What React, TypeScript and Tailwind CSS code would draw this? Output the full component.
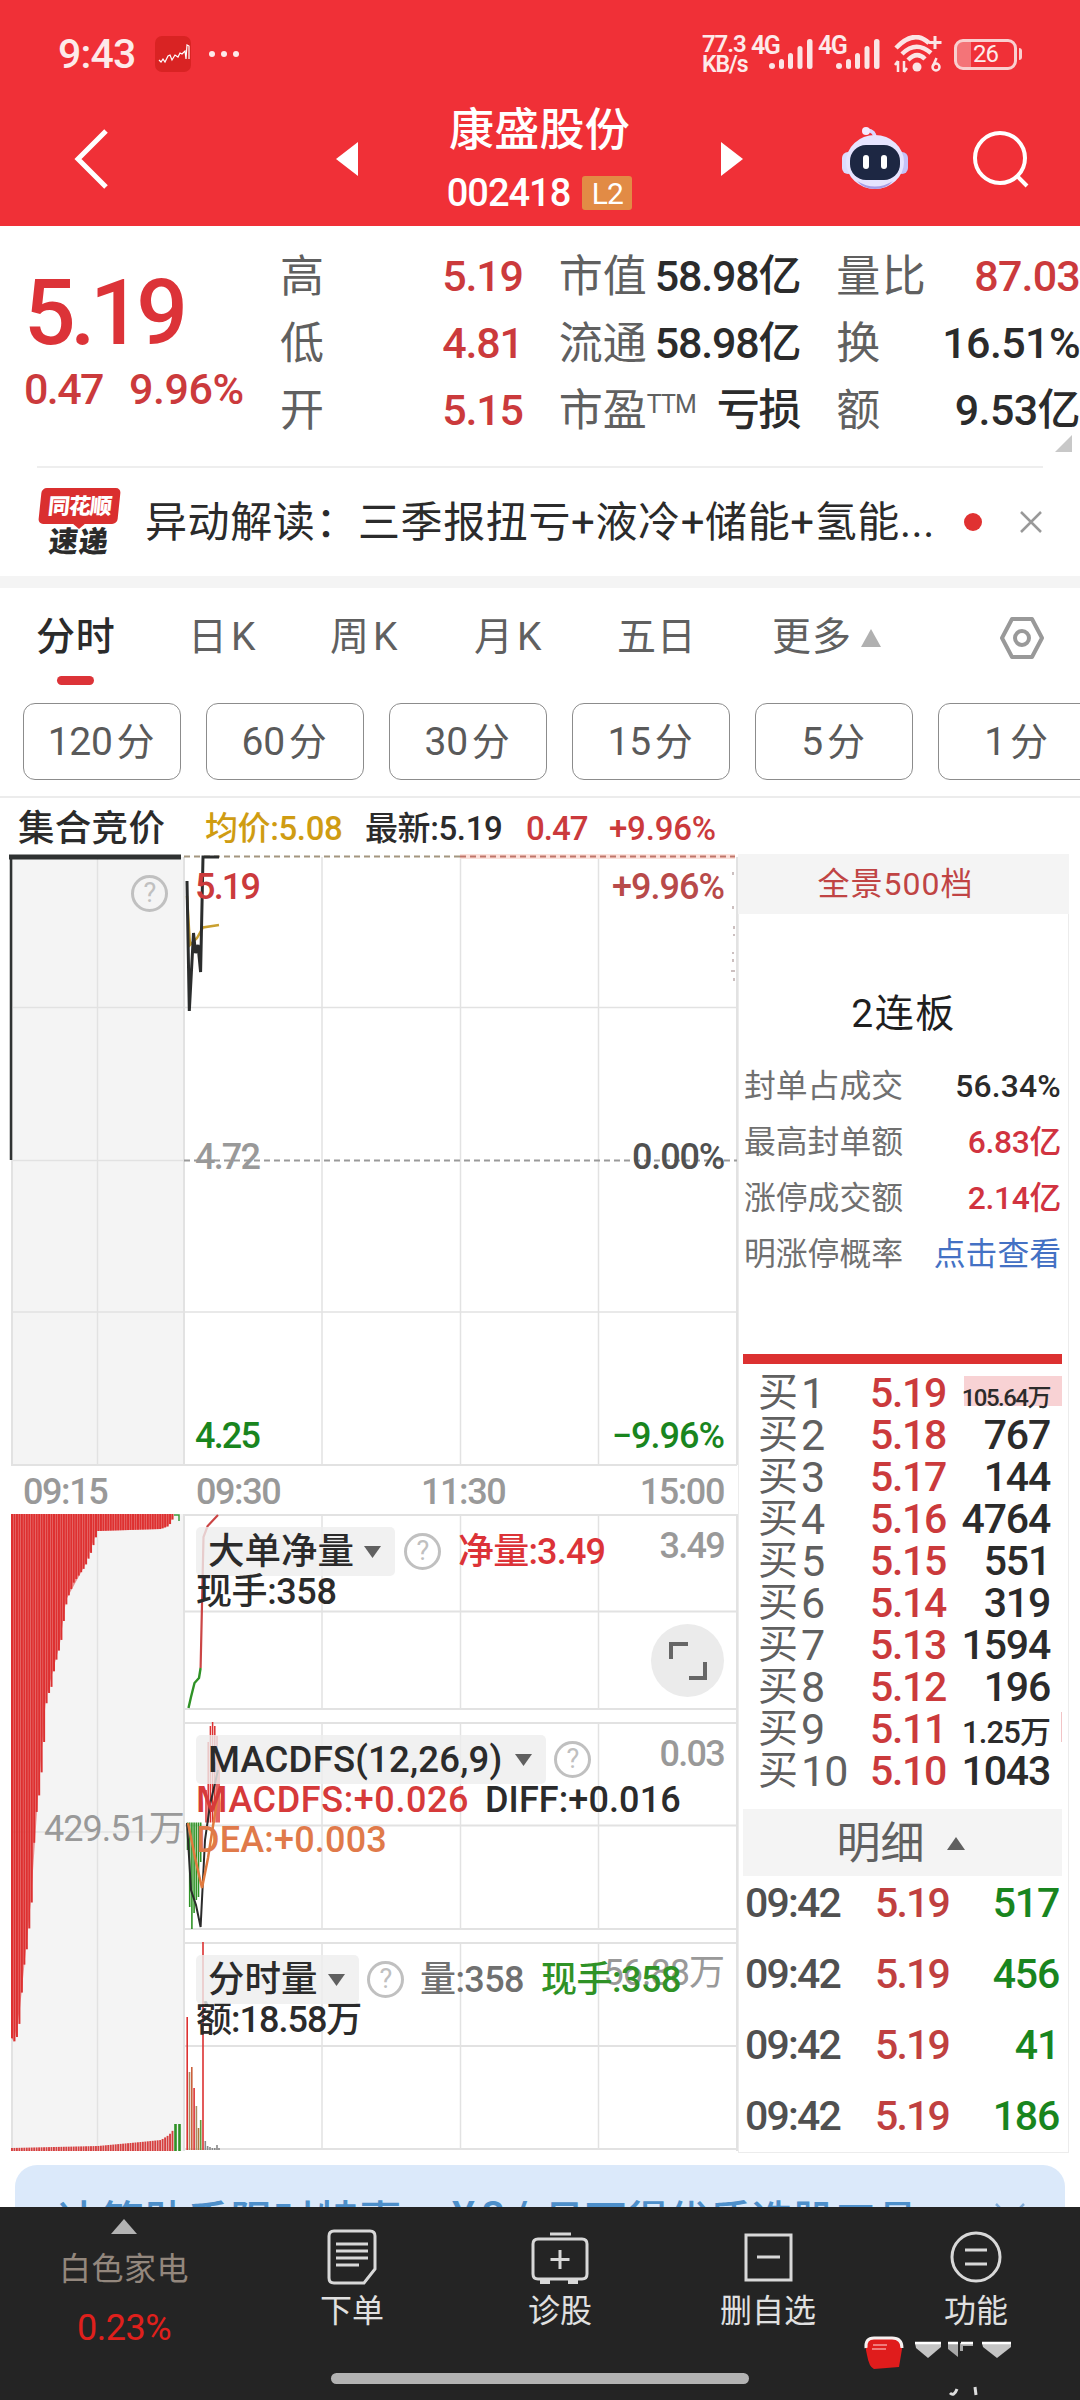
import { Fragment } from 'react';
import type { ReactNode } from 'react';

const RED = '#dc3131';

const quotes = [
  { a: '高', av: '5.19', b: '市值', bv: '58.98亿', c: '量比', cv: '87.03', hot: true },
  { a: '低', av: '4.81', b: '流通', bv: '58.98亿', c: '换', cv: '16.51%' },
  { a: '开', av: '5.15', b: '市盈', sup: 'TTM', bv: '亏损', c: '额', cv: '9.53亿' },
];

const periods = ['120分', '60分', '30分', '15分', '5分', '1分'];

const limitInfo = [
  { label: '封单占成交', value: '56.34%', cls: 'text-[#2b2b2b] font-medium tracking-[0.2px]' },
  { label: '最高封单额', value: '6.83亿', cls: 'text-[#d13340] font-medium tracking-[-0.3px]' },
  { label: '涨停成交额', value: '2.14亿', cls: 'text-[#d13340] font-medium tracking-[-0.3px]' },
  { label: '明涨停概率', value: '点击查看', cls: 'text-[#4471c4]' },
];

const bids = [
  { price: '5.19', vol: '105.64万' },
  { price: '5.18', vol: '767' },
  { price: '5.17', vol: '144' },
  { price: '5.16', vol: '4764' },
  { price: '5.15', vol: '551' },
  { price: '5.14', vol: '319' },
  { price: '5.13', vol: '1594' },
  { price: '5.12', vol: '196' },
  { price: '5.11', vol: '1.25万' },
  { price: '5.10', vol: '1043' },
];

const trades = ['517', '456', '41', '186'];

// [x, bottom] outline of the unmatched auction volume
const auctionOutline = [
  [10, 2037], [14, 2042], [17.5, 2033], [20, 2008], [22, 1973], [27, 1942], [31, 1900], [34, 1823],
  [38, 1797], [42.5, 1755], [44, 1723], [46, 1698], [50.5, 1687], [54, 1665], [60, 1643], [63, 1620],
  [66, 1600], [73, 1582], [84, 1567], [90, 1553], [97, 1531], [160, 1529], [168, 1526], [173, 1517],
];

// [x, top] outline of the matched auction volume
const matchedOutline = [[10, 2148], [97, 2146], [140, 2142], [160, 2140], [168, 2135], [174, 2128]];

function interpolate(points: number[][], x: number) {
  for (let i = 1; i < points.length; i++) {
    const [x0, y0] = points[i - 1];
    const [x1, y1] = points[i];
    if (x <= x1) return y0 + ((y1 - y0) * (x - x0)) / (x1 - x0);
  }
  return points[points.length - 1][1];
}

const barXs = Array.from({ length: 66 }, (_, i) => 11 + i * 2.47);

const macdUp = [[206, 1790], [208.2, 1742], [210.4, 1726], [212.6, 1722], [214.8, 1726], [217, 1736], [219, 1752]];
const macdDown = [[187.5, 1850], [189.7, 1907], [191.9, 1929], [194.1, 1913], [196.3, 1900], [198.5, 1897], [200.7, 1862]];
const volumeBars: [number, number, string][] = [
  [187.2, 2017, RED], [189.5, 2072, '#a98b64'], [191.8, 2067, '#c9603c'], [194.1, 2088, RED], [196.4, 2106, '#a98b64'],
  [198.5, 2128, '#b0763e'], [200.7, 2120, '#5f9c3c'], [203, 1942, RED], [205.3, 2141, '#888'], [207.6, 2146, '#888'],
  [210, 2147, '#888'], [212.4, 2148, '#888'], [214.8, 2148, '#888'], [217, 2145, '#888'], [219, 2148, '#888'],
];

function SignalBars() {
  return (
    <svg width="44" height="30" viewBox="0 0 44 30" fill="#fbe5e5">
      <rect x="0" y="24" width="6" height="6" rx="3" />
      <rect x="10" y="20" width="5" height="10" rx="2.5" />
      <rect x="19" y="14" width="5" height="16" rx="2.5" />
      <rect x="28.5" y="7" width="5" height="23" rx="2.5" />
      <rect x="38" y="0" width="5.5" height="30" rx="2.5" />
    </svg>
  );
}

function StatusBar() {
  return (
    <div className="flex h-[108px] items-center pl-[58px] text-[#fdeaea]">
      <span className="w-[97px] pt-[2px] text-[41px] font-medium tracking-[-0.8px]">9:43</span>
      <svg width="36" height="36" viewBox="0 0 36 36">
        <rect width="36" height="36" rx="7" fill="#d92323" />
        <path d="M4 24 l2 2 l2-3 l2 3 l3-6 l2-1 l2 5 l3-5 l3 2 l2-4 l2 1 l3-3 l1 8 l1-14 l2 1 v13" fill="none" stroke="#fff" strokeWidth="1.2" />
      </svg>
      <svg className="ml-[17px]" width="32" height="8" viewBox="0 0 32 8" fill="#fdeaea">
        <circle cx="4" cy="4" r="3" />
        <circle cx="16" cy="4" r="3" />
        <circle cx="28" cy="4" r="3" />
      </svg>
      <div className="ml-auto flex items-center pr-[58px]">
        <div className="flex w-[51px] flex-col text-[24px] leading-[19px] font-semibold tracking-[-1.1px]">
          <span>77.3</span>
          <span className="mt-px text-[23px]">KB/s</span>
        </div>
        <div className="flex w-[67px]">
          <span className="-mt-1 -ml-[2px] w-[18px] text-[25px] leading-[22px] font-semibold tracking-[-1.5px]">4G</span>
          <SignalBars />
        </div>
        <div className="flex w-[74px]">
          <span className="-mt-1 -ml-[2px] w-[18px] text-[25px] leading-[22px] font-semibold tracking-[-1.5px]">4G</span>
          <SignalBars />
        </div>
        <svg width="48" height="38" viewBox="0 0 48 38" fill="none" stroke="#fbe5e5" strokeWidth="4.5">
          <path d="M2 13 Q20 -6 35 8" />
          <path d="M8 19 Q22 5 37 18" />
          <path d="M14 25 Q23 16 31 24" />
          <circle cx="23" cy="32" r="4.5" fill="#fbe5e5" stroke="none" />
          <path d="M41 1 V14 M34.5 7.5 H47.5" strokeWidth="3" />
          <path d="M4 26 V37 M1 30 L4 26 M10 26 V37 M13 33 L10 37" strokeWidth="2.5" />
          <circle cx="42" cy="32" r="3.5" strokeWidth="2.5" />
          <path d="M39 31 L42.5 23" strokeWidth="2.5" />
        </svg>
        <div className="ml-3 flex items-center">
          <div className="flex h-[31px] w-[63px] items-center justify-center rounded-[9px] border-[3px] border-[#f9cfcf] bg-linear-to-r from-[#f47478] from-25% to-transparent to-25% text-[24px] tracking-[-1px]">
            26
          </div>
          <div className="ml-[2px] h-3 w-[3px] rounded-r bg-[#f9cfcf]" />
        </div>
      </div>
    </div>
  );
}

function Header() {
  return (
    <header className="h-[226px] bg-[#f03037] text-white">
      <StatusBar />
      <div className="flex h-[102px] items-center">
        <svg className="ml-[73px] shrink-0" width="36" height="60" viewBox="0 0 36 60" fill="none" stroke="#fff" strokeWidth="5">
          <path d="M33 2 L5 30 L33 58" />
        </svg>
        <svg className="ml-[227px] shrink-0" width="22" height="34" viewBox="0 0 22 34" fill="#fff">
          <path d="M22 0 V34 L0 17 Z" />
        </svg>
        <div className="flex w-[363px] shrink-0 flex-col items-center">
          <h1 className="text-[45px] leading-[56px] font-medium tracking-[0.3px]">康盛股份</h1>
          <div className="mt-[12px] flex h-[44px] items-center gap-[12px]">
            <span className="text-[38px] font-medium tracking-[-1px]">002418</span>
            <span className="flex h-[34px] w-[50px] items-center justify-center rounded-[3px] bg-[#e28b45] text-[30px] tracking-[-1px]">L2</span>
          </div>
        </div>
        <svg className="shrink-0" width="22" height="34" viewBox="0 0 22 34" fill="#fff">
          <path d="M0 0 V34 L22 17 Z" />
        </svg>
        <svg className="-mt-[2px] ml-[98px] shrink-0" width="68" height="64" viewBox="0 0 68 64">
          <path d="M34 12 Q34 5 26 4" fill="none" stroke="#dcd6ff" strokeWidth="3.5" />
          <circle cx="25" cy="5" r="4" fill="#f4eaff" />
          <rect x="1" y="26" width="12" height="22" rx="6" fill="#dcdcff" />
          <rect x="55" y="26" width="12" height="22" rx="6" fill="#c4c2f8" />
          <ellipse cx="34" cy="36" rx="29" ry="27" fill="#e6e4ff" />
          <path d="M16 55 Q34 66 52 55 Q45 63 34 63 Q23 63 16 55" fill="#a79ce6" />
          <rect x="9" y="19" width="50" height="35" rx="16" fill="#1d2743" />
          <rect x="22" y="29" width="6" height="14" rx="3" fill="#fff" />
          <rect x="40" y="29" width="6" height="14" rx="3" fill="#fff" />
        </svg>
        <svg className="ml-[64px] shrink-0" width="58" height="58" viewBox="0 0 58 58" fill="none" stroke="#fff" strokeWidth="4">
          <circle cx="27" cy="28" r="25" />
          <path d="M44 46 L54 56" />
        </svg>
      </div>
    </header>
  );
}

function Quote() {
  return (
    <section className="relative flex h-[240px] bg-white">
      <div className="w-[280px] pt-[45px] pl-[24px] text-[#dc3338]">
        <div className="text-[91px] leading-[84px] font-medium tracking-[-5.5px]">5.19</div>
        <div className="mt-[14px] flex gap-[26px] text-[43px] leading-[40px] font-medium text-[#cb3a3c]">
          <span className="tracking-[-1.6px]">0.47</span>
          <span className="tracking-[-0.4px]">9.96%</span>
        </div>
      </div>
      <div className="w-[800px] pt-[17px]">
        {quotes.map((q) => (
          <div key={q.a} className="flex h-[67px] items-center text-[44px] text-[#606060]">
            <span className="w-[60px]">{q.a}</span>
            <span className="w-[183px] text-right text-[43px] font-medium tracking-[-1.2px] text-[#cb3a3c]">{q.av}</span>
            <span className="ml-[36px] flex w-[242px] items-center justify-between">
              <span className="flex">
                {q.b}
                {q.sup && <span className="mt-[-3px] text-[25px] leading-[60px] tracking-[-0.8px]">{q.sup}</span>}
              </span>
              <span className="text-[43px] font-medium tracking-[-1.2px] text-[#2b2b2b]">{q.bv}</span>
            </span>
            <span className="ml-[36px] flex w-[244px] items-center justify-between">
              <span className="tracking-[1.5px]">{q.c}</span>
              <span className={q.hot ? 'text-[43px] font-medium tracking-[-0.8px] text-[#cb3a3c]' : 'text-[43px] font-medium tracking-[-0.6px] text-[#2b2b2b]'}>
                {q.cv}
              </span>
            </span>
          </div>
        ))}
      </div>
      <svg className="absolute right-[8px] bottom-[14px]" width="17" height="17" viewBox="0 0 17 17" fill="#c8c8c8">
        <path d="M17 0 V17 H0 Z" />
      </svg>
    </section>
  );
}

function News() {
  return (
    <section className="h-[122px] border-b-[12px] border-[#f4f4f4] bg-white">
      <div className="mx-[37px] flex h-[110px] items-center border-t-2 border-[#eeeeee]">
        <div className="-mt-[2px] flex w-[84px] shrink-0 flex-col items-center">
          <div className="flex h-[36px] w-[79px] -skew-x-6 items-center justify-center rounded-[5px] bg-[#da2f2f] text-[22px] font-black tracking-[-1px] text-white">
            同花顺
          </div>
          <svg className="-mt-px" width="14" height="6" viewBox="0 0 14 6" fill="#da2f2f">
            <path d="M0 0 H14 L7 6 Z" />
          </svg>
          <div className="-skew-x-6 text-[29px] leading-[26px] font-black tracking-[1px] text-[#2b2b2b]">速递</div>
        </div>
        <p className="ml-[24px] w-[813px] overflow-hidden text-[42px] tracking-[0.6px] whitespace-nowrap text-[#2b2b2b]">
          异动解读：三季报扭亏+液冷+储能+氢能...
        </p>
        <div className="ml-[6px] size-[18px] shrink-0 rounded-full bg-[#e03131]" />
        <svg className="ml-[38px] shrink-0" width="22" height="22" viewBox="0 0 22 22" stroke="#999" strokeWidth="2.5">
          <path d="M1 1 L21 21 M21 1 L1 21" />
        </svg>
      </div>
    </section>
  );
}

function Tabs() {
  return (
    <section className="h-[210px] border-b-2 border-[#ececec] bg-white">
      <div className="flex h-[98px] items-center pt-[1px] pl-[36px] text-[39px] text-[#606060]">
        <div className="relative w-[152px] font-medium tracking-[0.7px] text-[#2b2b2b]">
          分时
          <div className="absolute top-[68px] left-[21px] h-[9px] w-[37px] rounded-full bg-[#dc3338]" />
        </div>
        <span className="w-[142px] tracking-[4px]">日K</span>
        <span className="w-[144px] tracking-[4px]">周K</span>
        <span className="w-[143px] tracking-[4px]">月K</span>
        <span className="w-[155px] tracking-[0.7px]">五日</span>
        <span className="w-[89px] tracking-[1px]">更多</span>
        <svg width="20" height="18" viewBox="0 0 20 18" fill="#b0b0b0">
          <path d="M10 0 L20 18 H0 Z" />
        </svg>
        <svg className="ml-[118px]" width="46" height="44" viewBox="0 0 46 44" fill="none" stroke="#999" strokeWidth="4" strokeLinejoin="round">
          <path d="M13 3 H33 L43 22 L33 41 H13 L3 22 Z" />
          <circle cx="23" cy="22" r="7" />
        </svg>
      </div>
      <div className="mt-[17px] flex gap-[25px] overflow-hidden pl-[23px]">
        {periods.map((p) => (
          <div key={p} className="flex h-[77px] w-[158px] shrink-0 items-center justify-center rounded-[12px] border border-[#8c8c8c] pt-[2px] pr-[2px] text-[39px] tracking-[-0.3px] text-[#5a5a5a]">
            {p.slice(0, -1)}
            <span className="ml-[4px] text-[38px]">{p.slice(-1)}</span>
          </div>
        ))}
      </div>
    </section>
  );
}

function ChartSummary() {
  return (
    <div className="flex h-[56px] items-center pt-[6px] pl-[18px] text-[33px] font-medium tracking-[-0.4px]">
      <span className="w-[187px] text-[36.5px] tracking-[0.3px] text-[#2b2b2b]">集合竞价</span>
      <span className="w-[160px] text-[#cf9c12]">均价:5.08</span>
      <span className="w-[161px] text-[#2b2b2b]">最新:5.19</span>
      <span className="w-[83px] tracking-[-1px] text-[#cb3a3c]">0.47</span>
      <span className="tracking-[-0.2px] text-[#cb3a3c]">+9.96%</span>
    </div>
  );
}

function ChartGraphics() {
  return (
    <svg className="block" width="738" height="1309" viewBox="0 854 738 1309" fill="none">
      <rect x="11" y="857" width="172" height="608" fill="#f4f4f4" />
      <rect x="11" y="1514" width="172" height="637" fill="#f4f4f4" />
      <g stroke="#e2e2e2" strokeWidth="1.5">
        {[97.5, 322, 460.5, 598.5].map((x) => (
          <Fragment key={x}>
            <path d={`M${x} 857 V1465`} />
            {x < 100 ? <path d={`M${x} 1514 V2151`} /> : <path d={`M${x} 1515 V1709 M${x} 1723 V1929 M${x} 1943 V2149`} />}
          </Fragment>
        ))}
        <path d="M12 857 V1465 M12 1514 V2151 M184 857 V1465 M184 1514 V2151 M737 857 V1465 M737 1514 V2151" strokeWidth="2" />
        {[1007.5, 1312].map((y) => (
          <path key={y} d={`M11 ${y} H737`} />
        ))}
        <path d="M11 1160.5 H184 M11 1832 H184" />
        <path d="M11 1465 H737 M184 1515 H737 M184 1611.5 H737 M184 1709 H737 M184 1723 H737 M184 1825.5 H737 M184 1929 H737 M184 1943 H737 M184 2046 H737 M184 2149 H737" strokeWidth="2" />
      </g>

      {/* price pane */}
      <path d="M460 856.5 H735" stroke="#fbe0da" strokeWidth="5" />
      <path d="M184 856.5 H460" stroke="#a3967f" strokeWidth="2" strokeDasharray="6 4" />
      <path d="M460 856.5 H735" stroke="#c07468" strokeWidth="2" strokeDasharray="6 4" />
      <path d="M184 1160.5 H737" stroke="#9a9a9a" strokeWidth="2" strokeDasharray="6 4" />
      <path d="M187 896 L190 945 L197 938 L203 927.5 L219 925" stroke="#c9a030" strokeWidth="2.5" />
      <path d="M11 857 V1160" stroke="#2f3232" strokeWidth="2.5" />
      <path d="M9 857 H181" stroke="#2f3232" strokeWidth="5" />
      <path d="M187 881 L189.3 1011 L193.5 933 L195.5 953 L198 945 L200.6 972 L203 857 H219" stroke="#2b2d2d" strokeWidth="3" />
      <path d="M733 872 v3 M733 906 v3 M734 926 v3 M734 934 v2 M733 952 v2 M733 959 v3 M731 971 h4 M734 978 v3" stroke="#ccc0c0" strokeWidth="2" />

      {/* auction volumes */}
      {barXs.map((x) => (
        <Fragment key={x}>
          <rect x={x} y="1514" width="2" height={interpolate(auctionOutline, x) - 1514} fill="#dc3131" />
          <rect x={x} y={interpolate(matchedOutline, x)} width="1.9" height={2151 - interpolate(matchedOutline, x)} fill="#d64040" />
        </Fragment>
      ))}
      <path d="M11 1514 H173 V1517 L168 1526 L160 1529 L97 1531 L84 1567 L66 1600 L60 1643 L46 1698 L38 1797 L31 1900 L20 2008 L14 2042 L11 2037 Z" fill="#e03030" opacity=".5" />
      <path d="M174 1515 H179 V1521" stroke="#3c9a3c" strokeWidth="1.5" />
      <path d="M175.5 2124 V2151 M179.5 2124 V2151" stroke="#2f9226" strokeWidth="2.6" />

      {/* net big order pane */}
      <path d="M218 1515 L207.6 1526 L203.5 1537 L200.6 1668" stroke="#cb4545" strokeWidth="2.2" />
      <path d="M200.6 1668 L199 1678 L194.5 1683 L191 1697 L188.5 1708" stroke="#2f9226" strokeWidth="2.4" />

      {/* macd pane */}
      {macdUp.map(([x, y]) => (
        <path key={x} d={`M${x} 1822.5 V${y}`} stroke="#dc3131" strokeWidth="1.5" />
      ))}
      {macdDown.map(([x, y]) => (
        <path key={x} d={`M${x} 1822.5 V${y}`} stroke="#2f9226" strokeWidth="1.6" />
      ))}
      <path d="M187 1823 L191 1890 L196 1905 L200.6 1927 L205 1840 L210 1805 L218 1770" stroke="#2b2b2b" strokeWidth="2" />
      <path d="M188 1823 L196 1862 L202 1888 L208 1858 L213 1826 L218 1795" stroke="#e07a3e" strokeWidth="2.5" />

      {/* volume pane */}
      {volumeBars.map(([x, y, color]) => (
        <path key={x} d={`M${x} 2150 V${y}`} stroke={color} strokeWidth="1.6" />
      ))}
    </svg>
  );
}

function Help() {
  return (
    <span className="flex size-[37px] shrink-0 items-center justify-center rounded-full border-[3px] border-[#c0c0c0] text-[27px] leading-none text-[#c0c0c0]">
      ?
    </span>
  );
}

function Chip({ children, className }: { children: ReactNode; className: string }) {
  return (
    <span className={`flex h-[49px] shrink-0 items-center justify-between rounded-[5px] bg-[#eeeeee]/80 pr-[14px] pl-[12px] text-[36.5px] font-medium ${className}`}>
      {children}
      <svg width="17" height="12" viewBox="0 0 17 12" fill="#606060">
        <path d="M0 0 H17 L8.5 12 Z" />
      </svg>
    </span>
  );
}

function Chart() {
  return (
    <div className="relative h-[1309px] w-[738px] shrink-0 text-[36px] leading-[40px] font-medium tracking-[-1px] whitespace-nowrap text-[#2b2b2b]">
      <ChartGraphics />
      <div className="absolute top-[21px] left-[131px] font-normal"><Help /></div>
      <span className="absolute top-[13px] left-[195px] tracking-[-1.8px] text-[#cb3a3c]">5.19</span>
      <span className="absolute top-[13px] right-[14px] text-[#b84a4a]">+9.96%</span>
      <span className="absolute top-[283px] left-[195px] tracking-[-1.8px] text-[#999]">4.72</span>
      <span className="absolute top-[283px] right-[14px] tracking-[-1.2px] text-[#505050]">0.00%</span>
      <span className="absolute top-[562px] left-[195px] tracking-[-1.8px] text-[#19851e]">4.25</span>
      <span className="absolute top-[562px] right-[14px] text-[#19851e]">−9.96%</span>

      <div className="absolute top-[618px] left-0 flex w-full tracking-[-1.4px] text-[#999]">
        <span className="w-[196px] pl-[23px]">09:15</span>
        <span className="w-[225px]">09:30</span>
        <span>11:30</span>
        <span className="ml-auto pr-[14px]">15:00</span>
      </div>
      <span className="absolute top-[955px] left-[44px] font-normal tracking-[-1px] text-[#999]">429.51万</span>

      <div className="absolute top-[673px] left-[196px] w-[528px]">
        <div className="flex h-[49px] items-center">
          <Chip className="w-[199px] tracking-[0px]">大单净量</Chip>
          <span className="ml-[9px] font-normal"><Help /></span>
          <span className="ml-[17px] tracking-[-0.8px] text-[#dc3338]">净量:3.49</span>
          <span className="-mt-[12px] ml-auto tracking-[-1.7px] text-[#999]">3.49</span>
        </div>
        <div className="-mt-[4px] tracking-[-0.4px]">现手:358</div>
      </div>
      <div className="absolute top-[770px] left-[651px] flex size-[73px] items-center justify-center rounded-full bg-[#ebebeb]">
        <svg width="40" height="40" viewBox="0 0 40 40" fill="none" stroke="#666" strokeWidth="4">
          <path d="M3 18 V3 H20" />
          <path d="M37 21 V37 H21" />
        </svg>
      </div>

      <div className="absolute top-[881px] left-[196px] w-[528px]">
        <div className="flex h-[49px] items-center">
          <Chip className="w-[350px] tracking-[0.2px]">MACDFS(12,26,9)</Chip>
          <span className="ml-[8px] font-normal"><Help /></span>
          <span className="-mt-[12px] ml-auto tracking-[-1.7px] text-[#999]">0.03</span>
        </div>
        <div className="-mt-[4px] flex">
          <span className="w-[289px] tracking-[0.6px] text-[#d63a3a]">MACDFS:+0.026</span>
          <span className="tracking-[0.1px]">DIFF:+0.016</span>
        </div>
        <div className="tracking-[0.2px] text-[#e07a4a]">DEA:+0.003</div>
      </div>

      <div className="absolute top-[1101px] left-[196px] w-[528px]">
        <span className="absolute top-[-2px] right-0 font-normal tracking-[-1px] text-[#999]">56.88万</span>
        <div className="relative flex h-[49px] items-center">
          <Chip className="w-[163px] tracking-[0px]">分时量</Chip>
          <span className="ml-[8px] font-normal"><Help /></span>
          <span className="ml-[16px] w-[121px] tracking-[-0.6px] text-[#707070]">量:358</span>
          <span className="tracking-[-0.5px] text-[#2f9226]">现手:358</span>
        </div>
        <div className="-mt-[4px]">额:18.58万</div>
      </div>
    </div>
  );
}

function volumeClass(vol: string) {
  if (vol.length > 6) return 'text-[24px] tracking-[-1.5px] pt-[10px]';
  if (vol.endsWith('万')) return 'text-[31px] tracking-[-0.9px] pt-[6px]';
  return 'text-[41px] tracking-[-1.2px]';
}

function OrderBook() {
  return (
    <aside className="h-[1299px] w-[331px] border border-[#ececec] text-[#2b2b2b]">
      <div className="-mx-px -mt-px flex h-[60px] items-center justify-center bg-[#f4f4f4] pr-[16px] text-[32px] tracking-[1px] text-[#c04444]">全景500档</div>
      <div className="flex h-[199px] items-center justify-center pt-px text-[39px] tracking-[1.5px] text-[#1f1f1f]">2连板</div>
      <div className="-mt-[54px] px-[5px]">
        {limitInfo.map((row) => (
          <div key={row.label} className="flex h-[56px] items-center justify-between pr-[2px] text-[31.8px] text-[#707070]">
            {row.label}
            <span className={row.cls}>{row.value}</span>
          </div>
        ))}
      </div>
      <div className="mt-[71px] mr-[6px] ml-[4px] h-[10px] bg-[#dc3131]" />
      <div className="mt-[8px]">
        {bids.map((bid, i) => (
          <div key={bid.price} className="relative flex h-[42px] items-center text-[41px] leading-none">
            {i === 0 && <div className="absolute top-[4px] right-[6px] h-[30px] w-[98px] bg-[#f8d2d4]" />}
            {i === 8 && <div className="absolute top-[4px] right-[6px] h-[30px] w-px bg-[#f2c4c6]" />}
            <span className="relative flex w-[131px] items-center pl-[19px] text-[#606060]">
              <span className="text-[40px]">买</span>
              <span className="ml-[3px] text-[43px] tracking-[-1px]">{i + 1}</span>
            </span>
            <span className="relative font-medium tracking-[-1.3px] text-[#cb3a3c]">{bid.price}</span>
            <span className={`absolute right-[18px] font-medium ${volumeClass(bid.vol)}`}>{bid.vol}</span>
          </div>
        ))}
      </div>
      <div className="mt-[17px] mr-[6px] ml-[4px] flex h-[67px] items-center justify-center gap-[22px] bg-[#f4f4f4] pt-[2px] pr-[4px] text-[44px] text-[#606060]">
        明细
        <svg width="18" height="13" viewBox="0 0 18 13" fill="#606060">
          <path d="M9 0 L18 13 H0 Z" />
        </svg>
      </div>
      <div className="-mt-[8px]">
        {trades.map((vol) => (
          <div key={vol} className="flex h-[71px] items-center pr-[9px] pl-[6px] text-[41px] font-medium">
            <span className="w-[130px] tracking-[-1.8px] text-[#505050]">09:42</span>
            <span className="tracking-[-1.8px] text-[#c04040]">5.19</span>
            <span className="ml-auto tracking-[-1.2px] text-[#19851e]">{vol}</span>
          </div>
        ))}
      </div>
    </aside>
  );
}

function NavItem({ label, children }: { label: string; children: ReactNode }) {
  return (
    <div className="flex w-[208px] flex-col items-center pt-[20px]">
      <svg width="60" height="60" viewBox="0 0 60 60" fill="none" stroke="#d8d8d8" strokeWidth="3">
        {children}
      </svg>
      <span className="mt-[3px] text-[32px] leading-[42px] text-[#e0e0e0]">{label}</span>
    </div>
  );
}

function BottomBar() {
  return (
    <footer className="relative flex h-[193px] bg-[#242424]">
      <div className="flex w-[248px] flex-col items-center pt-[12px]">
        <svg width="26" height="15" viewBox="0 0 26 15" fill="#b3b3b3">
          <path d="M13 0 L26 15 H0 Z" />
        </svg>
        <span className="mt-[14px] text-[32px] leading-[42px] tracking-[0.5px] text-[#93877d]">白色家电</span>
        <span className="mt-[17px] text-[36px] leading-[42px] tracking-[-0.5px] text-[#e0201c]">0.23%</span>
      </div>
      <NavItem label="下单">
        <path d="M12 4 H48 Q53 4 53 9 V42 L42 56 H12 Q7 56 7 51 V9 Q7 4 12 4 Z" />
        <path d="M14 17 H46 M14 24 H46 M14 31 H46 M14 38 H37" />
      </NavItem>
      <NavItem label="诊股">
        <path d="M8 12 H52 Q57 12 57 17 V47 Q57 52 52 52 H8 Q3 52 3 47 V17 Q3 12 8 12 Z" />
        <path d="M20 7 H41 M30 23 V42 M20.5 32.5 H39.5" />
        <path d="M10 55 H20 M38 55 H48" strokeWidth="4" />
      </NavItem>
      <NavItem label="删自选">
        <path d="M8 8 H53 V53 H8 Z M19 30 H42" />
      </NavItem>
      <NavItem label="功能">
        <circle cx="30" cy="30" r="24" />
        <path d="M19 23 H41 M19 37 H41" />
      </NavItem>
      <div className="absolute top-[166px] left-[331px] h-[11px] w-[418px] rounded-full bg-[#b3b3b3]" />
      <svg className="absolute top-[128px] left-[860px]" width="220" height="65" viewBox="0 0 220 65">
        <path d="M8 4 H36 Q43 6 42 14 L39 32 L14 34 Q9 32 7 20 Q4 8 8 4" fill="#e01c1c" />
        <path d="M6 13 Q5 3 14 3 H32 Q42 3 42 13" fill="none" stroke="#f6f0f0" strokeWidth="3" />
        <path d="M13 10 H27 M12 14 H26" stroke="#f07a7a" strokeWidth="2" />
        <path d="M55 8 H81 V12 L68 23 L56 13 Z" fill="#c4c4c4" />
        <path d="M88 8 H98 V22 L88 14 Z M100 8 H113 V11 H103 V16 H100 Z" fill="#a8a8a8" />
        <path d="M122 8 H151 V12 L137 23 L123 12 Z" fill="#c4c4c4" />
        <path d="M55 8 H81 M88 8 H98 M101 8 H113 M122 8 H151" stroke="#fff" strokeWidth="2.5" />
        <path d="M90 58 Q94 62 97 54 M115 52 L116 60" fill="none" stroke="#ddd" strokeWidth="3" />
      </svg>
    </footer>
  );
}

export default function App() {
  return (
    <div className="flex h-[2400px] w-[1080px] flex-col overflow-hidden bg-white font-[Roboto,'Noto_Sans_CJK_SC',sans-serif]">
      <Header />
      <Quote />
      <News />
      <Tabs />
      <ChartSummary />
      <div className="flex h-[1311px]">
        <Chart />
        <OrderBook />
      </div>
      <div className="mx-[15px] h-[42px] overflow-hidden rounded-t-[22px] bg-[#dbe9fa]">
        <div className="flex items-start pt-[27px] pl-[43px] text-[43px] leading-[60px] font-medium text-[#4d8fca]">
          <span className="w-[394px]">决策助手限时特惠</span>
          <span className="-mt-[6px] w-[91px] tracking-[6px]">¥8/</span>
          <span className="text-[41.7px]">月可得优质选股工具</span>
          <svg className="mt-[11px] ml-[77px]" width="30" height="30" viewBox="0 0 30 30" stroke="#7fabd8" strokeWidth="2.5">
            <path d="M1 1 L29 29 M29 1 L1 29" />
          </svg>
        </div>
      </div>
      <BottomBar />
    </div>
  );
}
